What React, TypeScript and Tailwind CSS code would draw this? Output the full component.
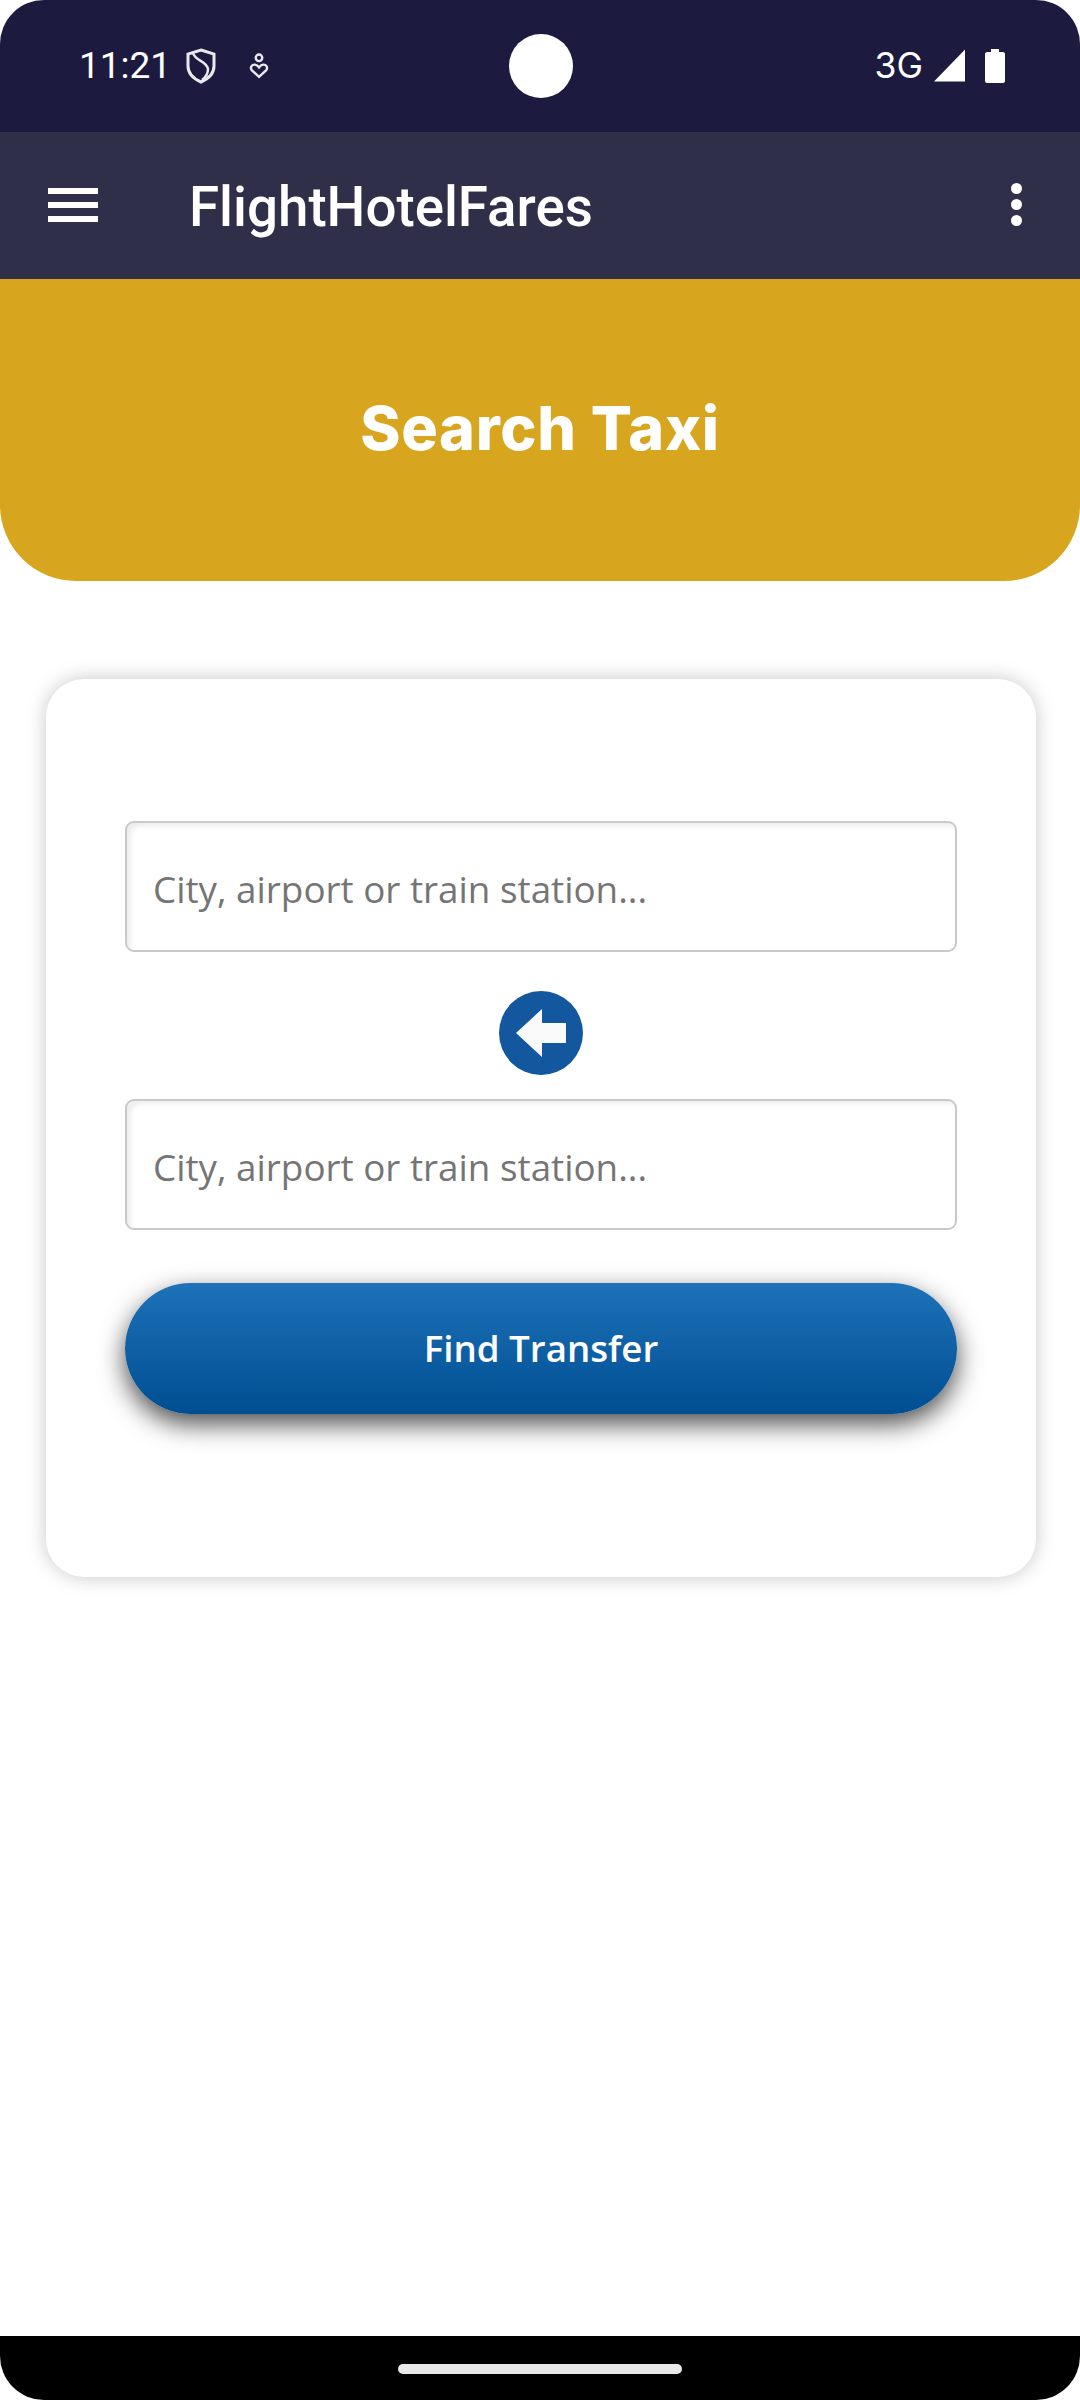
const sans = "font-['Open_Sans','Noto_Sans',sans-serif]";

function StationInput() {
  return (
    <div className="h-[131px] rounded-[9px] border-2 border-[#c9c9c9] bg-white shadow-[inset_7px_6px_4px_-3px_#eeeeee] pl-[26px] flex items-center">
      <span className={`${sans} text-[36.8px] leading-[48px] text-[#757575] pt-1`}>City, airport or train station...</span>
    </div>
  );
}

export default function App() {
  return (
    <div className="w-[1080px] h-[2400px] bg-white flex flex-col font-['Roboto',sans-serif] overflow-hidden">
      {/* Status bar */}
      <div className="relative h-[132px] shrink-0 bg-[#1c1b3f] rounded-t-[44px] flex items-center justify-between pl-[79px] pr-[75px] pb-[1px] text-white">
        <div className="flex items-center">
          <span className="text-[37px] leading-none">11:21</span>
          <svg className="ml-[15px]" width="30" height="36" viewBox="0 0 30 36" fill="none" stroke="#e8e8ee" strokeWidth="3">
            <path d="M15 2 L28 6 V18 C28 26 22 31 15 34 C8 31 2 26 2 18 V6 Z" />
            <path d="M7 5 C9 13 21 13 22 21 C22 25 20 29 16 32" strokeWidth="2.5" />
          </svg>
          <svg className="ml-[33px]" width="20" height="28" viewBox="0 0 22 30" fill="none" stroke="#e8e8ee" strokeWidth="2.6">
            <circle cx="11" cy="6" r="3.6" />
            <path d="M11 27 L3 19.5 C0.8 16.5 3.5 13 6.5 13.5 C8.5 13.8 10 15 11 16.5 C12 15 13.5 13.8 15.5 13.5 C18.5 13 21.2 16.5 19 19.5 Z" />
          </svg>
        </div>
        <div className="absolute left-[509px] top-[34px] w-[64px] h-[64px] rounded-full bg-white" />
        <div className="flex items-center">
          <span className="text-[35.5px] leading-none font-['Inter',sans-serif]">3G</span>
          <svg className="ml-[11px]" width="32" height="33" viewBox="0 0 33 33" fill="white">
            <path d="M32 0 V33 H0 Z" />
          </svg>
          <svg className="ml-[19px]" width="20" height="34" viewBox="0 0 20 34" fill="white">
            <path d="M6 0 H14 V3 H18 C19 3 20 4 20 5 V32 C20 33 19 34 18 34 H2 C1 34 0 33 0 32 V5 C0 4 1 3 2 3 H6 Z" />
          </svg>
        </div>
      </div>

      {/* App bar */}
      <div className="h-[147px] shrink-0 bg-[#2f2f4a] flex items-center pl-[48px] pr-[58px] text-white">
        <div className="w-[50px] flex flex-col gap-[8px] mb-[1px]">
          <div className="h-[6px] bg-white" />
          <div className="h-[6px] bg-white" />
          <div className="h-[6px] bg-white" />
        </div>
        <span className="ml-[91px] text-[54.7px] font-medium leading-none pt-[3px]">FlightHotelFares</span>
        <div className="ml-auto w-[11px] flex flex-col gap-[5px] pb-[2px]">
          <div className="h-[11px] rounded-full bg-white" />
          <div className="h-[11px] rounded-full bg-white" />
          <div className="h-[11px] rounded-full bg-white" />
        </div>
      </div>

      {/* Title band */}
      <div className="h-[302px] shrink-0 bg-[#d8a51e] rounded-b-[76px] flex items-center justify-center">
        <h1 className="font-['Inter',sans-serif] font-extrabold text-[61px] leading-none text-white tracking-[0.7px] pb-[3px]">Search Taxi</h1>
      </div>

      {/* Search card */}
      <div className="flex-1 pl-[46px] pr-[44px] pt-[98px]">
        <div className="h-[898px] rounded-[38px] bg-white shadow-[0_0_20px_rgba(0,0,0,0.22)] px-[79px] pt-[142px] flex flex-col">
          <StationInput />
          <div className="h-[147px] flex justify-center pt-[39px]">
            <div className="w-[84px] h-[84px] rounded-full bg-[#13579f] flex items-center justify-center">
              <svg width="50" height="48" viewBox="0 0 50 48" className="blur-[0.6px]">
                <path d="M0 24 L26 0 V14 H50 V34 H26 V48 Z" fill="#fafafa" />
              </svg>
            </div>
          </div>
          <StationInput />
          <button className={`${sans} mt-[53px] h-[131px] rounded-full bg-gradient-to-b from-[#1d72b8] to-[#004e92] shadow-[0_10px_26px_rgba(0,0,0,0.7)] text-white text-[36.7px] font-semibold`}>
            Find Transfer
          </button>
        </div>
      </div>

      {/* Navigation bar */}
      <div className="h-[64px] shrink-0 bg-black rounded-b-[44px] flex justify-center pt-[28px]">
        <div className="w-[284px] h-[10px] rounded-full bg-[#e8e8e8]" />
      </div>
    </div>
  );
}
